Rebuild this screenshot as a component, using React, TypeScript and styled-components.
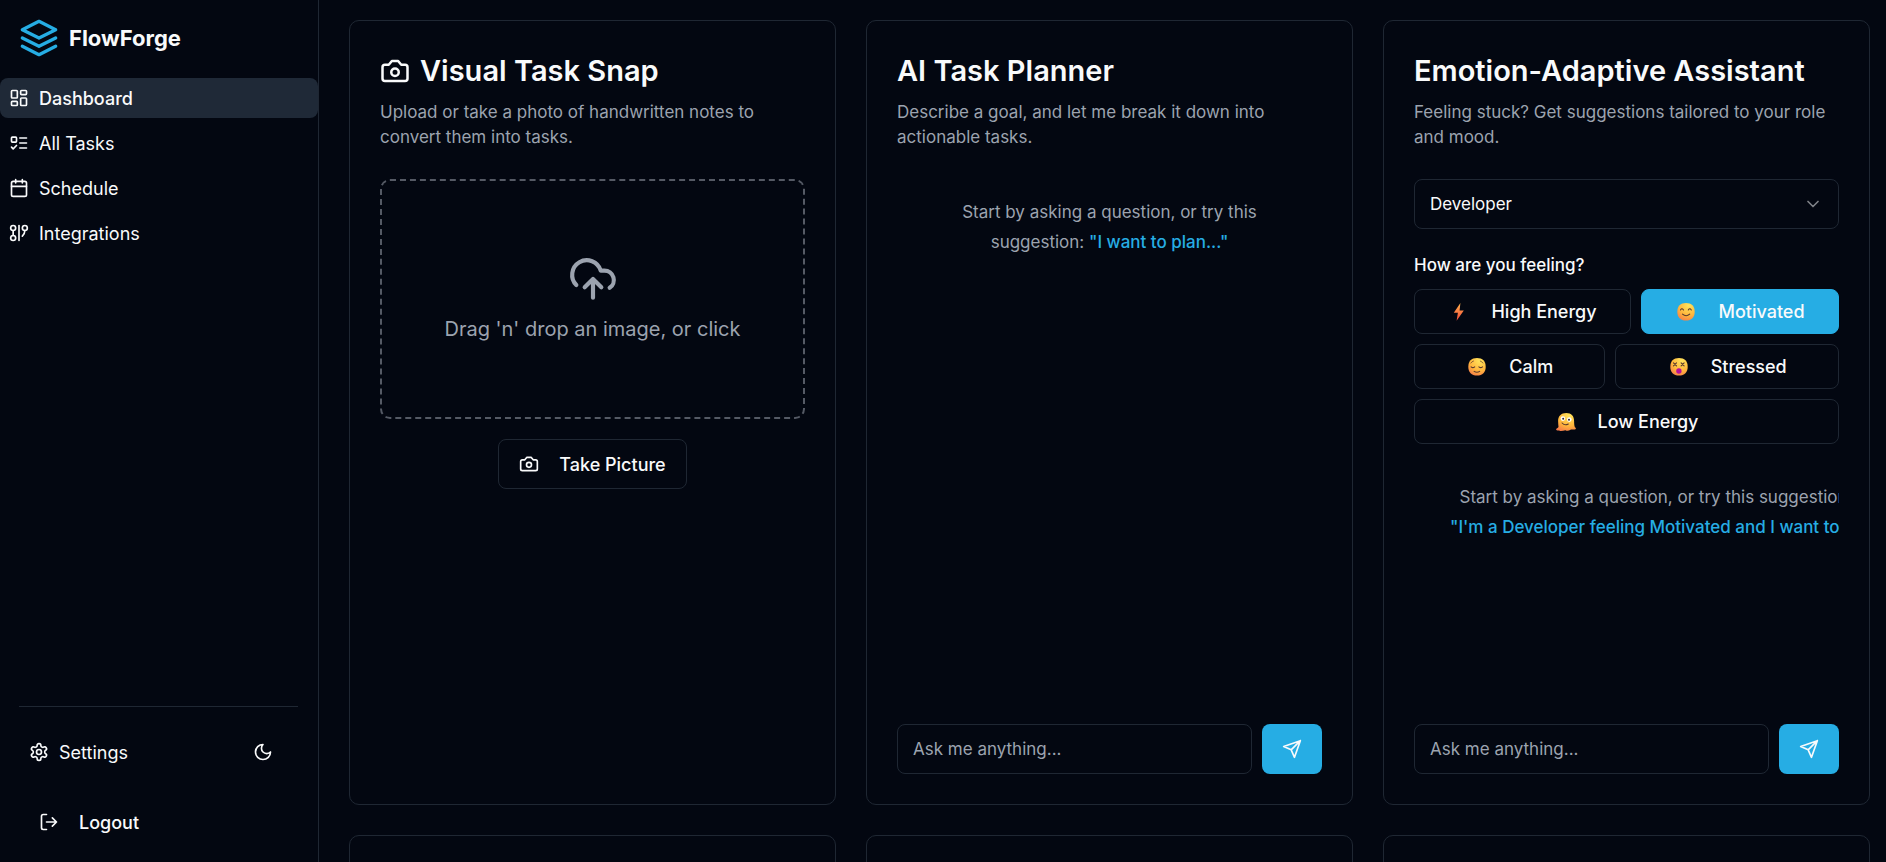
import React, { useState } from "react";
import styled, { createGlobalStyle, css } from "styled-components";

const color = {
  bg: "#030711",
  border: "#1f2733",
  active: "#1f2937",
  text: "#f9fafb",
  muted: "#9ca3af",
  dashed: "#555a65",
  primary: "#26ade4",
};

const GlobalStyle = createGlobalStyle`
  *, *::before, *::after { box-sizing: border-box; }
  body {
    margin: 0;
    background: ${color.bg};
    color: ${color.text};
    font-family: Inter, "Liberation Sans", sans-serif;
    font-size: 17px;
    line-height: 25px;
  }
  h1, h2, p { margin: 0; }
  button, input, select { font: inherit; color: inherit; }
`;

/* ---------- icons ---------- */

const Svg = styled.svg<{ $size: number }>`
  width: ${(p) => p.$size}px;
  height: ${(p) => p.$size}px;
  flex: none;
  fill: none;
  stroke: currentColor;
  stroke-width: 2;
  stroke-linecap: round;
  stroke-linejoin: round;
`;

function Icon({ size = 20, children }: { size?: number; children: React.ReactNode }) {
  return (
    <Svg $size={size} viewBox="0 0 24 24" aria-hidden="true">
      {children}
    </Svg>
  );
}

const layers = (
  <>
    <path d="M12 2 2 7l10 5 10-5-10-5Z" />
    <path d="m2 17 10 5 10-5" />
    <path d="m2 12 10 5 10-5" />
  </>
);
const dashboard = (
  <>
    <rect width="7" height="9" x="3" y="3" rx="1" />
    <rect width="7" height="5" x="14" y="3" rx="1" />
    <rect width="7" height="9" x="14" y="12" rx="1" />
    <rect width="7" height="5" x="3" y="16" rx="1" />
  </>
);
const listTodo = (
  <>
    <rect x="3" y="5" width="6" height="6" rx="1" />
    <path d="m3 17 2 2 4-4M13 6h8M13 12h8M13 18h8" />
  </>
);
const calendar = (
  <>
    <path d="M8 2v4M16 2v4M3 10h18" />
    <rect width="18" height="18" x="3" y="4" rx="2" />
  </>
);
const gitGraph = (
  <>
    <circle cx="5" cy="6" r="3" />
    <path d="M5 9v6" />
    <circle cx="5" cy="18" r="3" />
    <path d="M12 3v18" />
    <circle cx="19" cy="6" r="3" />
    <path d="M16 15.7A9 9 0 0 0 19 9" />
  </>
);
const gear = (
  <>
    <path d="M12.22 2h-.44a2 2 0 0 0-2 2v.18a2 2 0 0 1-1 1.73l-.43.25a2 2 0 0 1-2 0l-.15-.08a2 2 0 0 0-2.73.73l-.22.38a2 2 0 0 0 .73 2.73l.15.1a2 2 0 0 1 1 1.72v.51a2 2 0 0 1-1 1.74l-.15.09a2 2 0 0 0-.73 2.73l.22.38a2 2 0 0 0 2.73.73l.15-.08a2 2 0 0 1 2 0l.43.25a2 2 0 0 1 1 1.73V20a2 2 0 0 0 2 2h.44a2 2 0 0 0 2-2v-.18a2 2 0 0 1 1-1.73l.43-.25a2 2 0 0 1 2 0l.15.08a2 2 0 0 0 2.73-.73l.22-.39a2 2 0 0 0-.73-2.73l-.15-.08a2 2 0 0 1-1-1.74v-.5a2 2 0 0 1 1-1.74l.15-.09a2 2 0 0 0 .73-2.73l-.22-.38a2 2 0 0 0-2.73-.73l-.15.08a2 2 0 0 1-2 0l-.43-.25a2 2 0 0 1-1-1.73V4a2 2 0 0 0-2-2z" />
    <circle cx="12" cy="12" r="3" />
  </>
);
const moon = <path d="M12 3a6 6 0 0 0 9 9 9 9 0 1 1-9-9Z" />;
const logOut = <path d="M9 21H5a2 2 0 0 1-2-2V5a2 2 0 0 1 2-2h4M16 17l5-5-5-5M21 12H9" />;
const camera = (
  <>
    <path d="M14.5 4h-5L7 7H4a2 2 0 0 0-2 2v9a2 2 0 0 0 2 2h16a2 2 0 0 0 2-2V9a2 2 0 0 0-2-2h-3l-2.5-3z" />
    <circle cx="12" cy="13" r="3" />
  </>
);
const uploadCloud = (
  <path d="M4 14.899A7 7 0 1 1 15.71 8h1.79a4.5 4.5 0 0 1 2.5 8.242M12 12v9M16 16l-4-4-4 4" />
);
const send = <path d="m22 2-7 20-4-9-9-4ZM22 2 11 13" />;
const chevron = <path d="m6 9 6 6 6-6" />;

/* ---------- mood faces ---------- */

const Face = styled.svg`
  width: 23px;
  height: 20px;
  flex: none;
`;

const Gradients = () => (
  <defs>
    <radialGradient id="skin" cx="0.65" cy="0.15" r="0.95">
      <stop offset="0" stopColor="#ffe45c" />
      <stop offset="0.6" stopColor="#ffb53c" />
      <stop offset="1" stopColor="#f5784a" />
    </radialGradient>
    <linearGradient id="bolt" x1="0" y1="0" x2="0" y2="1">
      <stop offset="0" stopColor="#ffb34a" />
      <stop offset="1" stopColor="#f5483c" />
    </linearGradient>
  </defs>
);

const headPath = "M11 1C16.500 1 19.700 4.200 19.700 9.800S16.500 18.600 11 18.600 2.300 15.400 2.300 9.800 5.500 1 11 1Z";
const ink = { fill: "none", stroke: "#5b3a2e", strokeWidth: 1.1, strokeLinecap: "round" as const };

const faces = {
  bolt: <path d="M12.400 1 5.800 10.800h4.100l-1.300 8 7.200-10.300h-4.200Z" fill="url(#bolt)" />,
  smile: (
    <>
      <path d={headPath} fill="url(#skin)" />
      <path d="M5.500 8q1.400-2.400 3 0M13.300 8q1.500-2.400 3 0M7.500 12.200q3.600 3.200 7.200 0" {...ink} />
    </>
  ),
  calm: (
    <>
      <path d={headPath} fill="url(#skin)" />
      <path d="M5.100 9.800q1.800 1.600 3.600 0M12.900 9.800q1.800 1.600 3.600 0M8.100 14.400q2.800 1.800 5.600 0" {...ink} />
      <path d="M4.900 6q1-1.600 2.600-2M16.900 6q-1-1.600-2.600-2" {...ink} strokeWidth={0.7} />
    </>
  ),
  dizzy: (
    <>
      <path d={headPath} fill="url(#skin)" />
      <path d="m5.500 5.800 3 3m0-3-3 3M13.100 5.800l3 3m0-3-3 3" {...ink} />
      <circle cx="10.9" cy="14" r="2.7" fill="#b5109a" />
    </>
  ),
  melting: (
    <>
      <path
        d="M11.300 1C16.500 1 19.100 4.200 19.100 9c0 2.400.2 4.600.8 6.200 1.200.4 1.500 2 .1 2.300-2.200.4-3.500-.4-4.900.5-1.600 1-3.300.9-4.700.2-2.400.5-4.800 1.400-6.200.3-1.500.2-3.200-.1-3.100-1.200.1-1.100 1.800-.9 2.400-2.400C3.400 13.200 3.100 11.300 3.100 9 3.100 4.200 6.100 1 11.300 1Z"
        fill="url(#skin)"
      />
      <circle cx="7.900" cy="6.600" r="2.300" fill="#fff" />
      <circle cx="14.300" cy="7.600" r="2.300" fill="#fff" />
      <circle cx="8.200" cy="6.700" r="1" fill="#3b2b2b" />
      <circle cx="14" cy="7.700" r="1" fill="#3b2b2b" />
      <path d="M7.100 11q2.600 3 6.200 1" {...ink} />
    </>
  ),
};

/* ---------- layout ---------- */

const Shell = styled.div`
  display: flex;
  height: 100vh;
  overflow: hidden;
`;

const Sidebar = styled.aside`
  flex: none;
  width: 319px;
  display: flex;
  flex-direction: column;
  border-right: 1px solid ${color.border};
`;

const Brand = styled.div`
  display: flex;
  align-items: center;
  gap: 10px;
  padding: 18px 19px 20px;
  color: ${color.primary};
`;

const BrandName = styled.h1`
  color: ${color.text};
  font-size: 22px;
  line-height: 30px;
  font-weight: 700;
`;

const Nav = styled.nav`
  display: flex;
  flex-direction: column;
  gap: 5px;
`;

const NavLink = styled.a<{ $active?: boolean }>`
  display: flex;
  align-items: center;
  gap: 10px;
  height: 40px;
  padding: 0 9px;
  border-radius: 8px;
  color: ${color.text};
  text-decoration: none;
  font-size: 18px;
  font-weight: ${(p) => (p.$active ? 500 : 400)};
  background: ${(p) => (p.$active ? color.active : "transparent")};
`;

const FooterLink = styled(NavLink)`
  padding: 0 10px;
`;

const SidebarFooter = styled.div`
  margin: auto 20px 20px 19px;
  padding-top: 25px;
  border-top: 1px solid ${color.border};
  display: flex;
  flex-direction: column;
  gap: 30px;
`;

const FooterRow = styled.div`
  display: flex;
  align-items: center;
  justify-content: space-between;
`;

const ghost = css`
  display: inline-flex;
  align-items: center;
  height: 40px;
  border: 0;
  background: transparent;
  cursor: pointer;
`;

const IconButton = styled.button`
  ${ghost}
  width: 50px;
  justify-content: center;
  margin-right: 10px;
`;

const LogoutButton = styled.button`
  ${ghost}
  gap: 20px;
  padding: 0 20px;
  font-size: 18px;
  font-weight: 500;
`;

const Main = styled.main`
  flex: 1;
  min-width: 0;
  overflow: hidden;
  padding: 20px 16px 0 30px;
`;

const Grid = styled.div`
  display: grid;
  grid-template-columns: repeat(3, minmax(0, 1fr));
  gap: 30px;
`;

const Card = styled.section`
  display: flex;
  flex-direction: column;
  min-height: 785px;
  padding: 30px;
  border: 1px solid ${color.border};
  border-radius: 10px;
`;

const CardTitle = styled.h2`
  display: flex;
  align-items: center;
  gap: 10px;
  font-size: 29px;
  line-height: 40px;
  font-weight: 600;
`;

const CardText = styled.p`
  margin: 9px 0 29px;
  color: ${color.muted};
`;

const DropZone = styled.button`
  display: flex;
  flex-direction: column;
  align-items: center;
  justify-content: center;
  gap: 10px;
  height: 240px;
  border: 2px dashed ${color.dashed};
  border-radius: 10px;
  background: transparent;
  color: ${color.muted};
  font-size: 20px;
  line-height: 30px;
  cursor: pointer;
`;

const outline = css`
  display: inline-flex;
  align-items: center;
  justify-content: center;
  gap: 20px;
  border: 1px solid ${color.border};
  border-radius: 8px;
  background: transparent;
  font-size: 18px;
  font-weight: 500;
  cursor: pointer;
`;

const TakePicture = styled.button`
  ${outline}
  align-self: center;
  height: 50px;
  margin-top: 20px;
  padding: 0 20px;
`;

const SelectWrap = styled.div`
  display: grid;
  align-items: center;
  > * { grid-area: 1 / 1; }
  > svg {
    justify-self: end;
    margin-right: 16px;
    opacity: 0.5;
    pointer-events: none;
  }
`;

const Select = styled.select`
  appearance: none;
  width: 100%;
  height: 50px;
  padding: 0 15px;
  border: 1px solid ${color.border};
  border-radius: 8px;
  background: ${color.bg};
`;

const MoodGroup = styled.fieldset`
  display: flex;
  flex-wrap: wrap;
  gap: 10px;
  min-width: 0;
  margin: 24px 0 20px;
  padding: 0;
  border: 0;
  > legend {
    padding: 0 0 11px;
    font-weight: 500;
  }
`;

const Mood = styled.button<{ $selected: boolean }>`
  ${outline}
  flex: 1 0 auto;
  height: 45px;
  padding: 0 15px;
  ${(p) => p.$selected && css`
    background: ${color.primary};
    border-color: ${color.primary};
  `}
`;

const Chat = styled.div`
  flex: 1;
  overflow: hidden;
`;

const Hint = styled.p<{ $wide?: boolean }>`
  padding: 18px ${(p) => (p.$wide ? 36 : 40)}px;
  width: ${(p) => (p.$wide ? "max-content" : "auto")};
  color: ${color.muted};
  line-height: 30px;
  text-align: center;
`;

const Suggestion = styled.button`
  padding: 0;
  border: 0;
  background: transparent;
  color: ${color.primary};
  font-weight: 500;
  white-space: nowrap;
  cursor: pointer;
`;

const AskForm = styled.form`
  display: flex;
  gap: 10px;
`;

const AskInput = styled.input`
  flex: 1;
  min-width: 0;
  height: 50px;
  padding: 0 15px;
  border: 1px solid ${color.border};
  border-radius: 8px;
  background: transparent;
  &::placeholder { color: ${color.muted}; opacity: 1; }
`;

const SendButton = styled.button`
  display: flex;
  align-items: center;
  justify-content: center;
  width: 60px;
  height: 50px;
  border: 0;
  border-radius: 8px;
  background: ${color.primary};
  cursor: pointer;
`;

function Ask() {
  return (
    <AskForm onSubmit={(e) => e.preventDefault()}>
      <AskInput placeholder="Ask me anything..." aria-label="Ask me anything" />
      <SendButton type="submit" aria-label="Send">
        <Icon>{send}</Icon>
      </SendButton>
    </AskForm>
  );
}

const links = [
  { label: "Dashboard", icon: dashboard },
  { label: "All Tasks", icon: listTodo },
  { label: "Schedule", icon: calendar },
  { label: "Integrations", icon: gitGraph },
];

const moods = [
  { label: "High Energy", face: faces.bolt },
  { label: "Motivated", face: faces.smile },
  { label: "Calm", face: faces.calm },
  { label: "Stressed", face: faces.dizzy },
  { label: "Low Energy", face: faces.melting },
];

export default function App() {
  const [mood, setMood] = useState("Motivated");
  const [role, setRole] = useState("Developer");

  return (
    <>
      <GlobalStyle />
      <Shell>
        <Sidebar>
          <Brand>
            <Icon size={40}>{layers}</Icon>
            <BrandName>FlowForge</BrandName>
          </Brand>
          <Nav>
            {links.map((l, i) => (
              <NavLink key={l.label} href="#" $active={i === 0}>
                <Icon>{l.icon}</Icon>
                {l.label}
              </NavLink>
            ))}
          </Nav>
          <SidebarFooter>
            <FooterRow>
              <FooterLink href="#">
                <Icon>{gear}</Icon>
                Settings
              </FooterLink>
              <IconButton type="button" aria-label="Toggle theme">
                <Icon>{moon}</Icon>
              </IconButton>
            </FooterRow>
            <FooterRow>
              <LogoutButton type="button">
                <Icon>{logOut}</Icon>
                Logout
              </LogoutButton>
            </FooterRow>
          </SidebarFooter>
        </Sidebar>

        <Main>
          <Grid>
            <Card>
              <CardTitle>
                <Icon size={30}>{camera}</Icon>
                Visual Task Snap
              </CardTitle>
              <CardText>Upload or take a photo of handwritten notes to convert them into tasks.</CardText>
              <DropZone type="button">
                <Icon size={50}>{uploadCloud}</Icon>
                Drag 'n' drop an image, or click
              </DropZone>
              <TakePicture type="button">
                <Icon>{camera}</Icon>
                Take Picture
              </TakePicture>
            </Card>

            <Card>
              <CardTitle>AI Task Planner</CardTitle>
              <CardText>Describe a goal, and let me break it down into actionable tasks.</CardText>
              <Chat>
                <Hint>
                  Start by asking a question, or try this suggestion:{" "}
                  <Suggestion type="button">"I want to plan..."</Suggestion>
                </Hint>
              </Chat>
              <Ask />
            </Card>

            <Card>
              <CardTitle>Emotion-Adaptive Assistant</CardTitle>
              <CardText>Feeling stuck? Get suggestions tailored to your role and mood.</CardText>
              <SelectWrap>
                <Select aria-label="Role" value={role} onChange={(e) => setRole(e.target.value)}>
                  <option>Developer</option>
                </Select>
                <Icon>{chevron}</Icon>
              </SelectWrap>
              <MoodGroup>
                <legend>How are you feeling?</legend>
                {moods.map((m) => (
                  <Mood
                    key={m.label}
                    type="button"
                    $selected={m.label === mood}
                    aria-pressed={m.label === mood}
                    onClick={() => setMood(m.label)}
                  >
                    <Face viewBox="0 0 23 20" aria-hidden="true">
                      <Gradients />
                      {m.face}
                    </Face>
                    {m.label}
                  </Mood>
                ))}
              </MoodGroup>
              <Chat>
                <Hint $wide>
                  Start by asking a question, or try this suggestion:
                  <br />
                  <Suggestion type="button">"I'm a {role} feeling {mood} and I want to..."</Suggestion>
                </Hint>
              </Chat>
              <Ask />
            </Card>

            <Card />
            <Card />
            <Card />
          </Grid>
        </Main>
      </Shell>
    </>
  );
}
